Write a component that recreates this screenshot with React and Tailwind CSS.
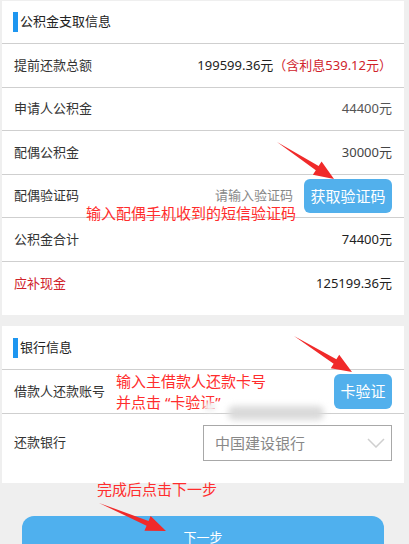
import React from "react";

function arrowPts(x1, y1, x2, y2, headLen = 20, headW = 8, shaftW = 2.6) {
  const dx = x2 - x1, dy = y2 - y1;
  const L = Math.hypot(dx, dy);
  const ux = dx / L, uy = dy / L;
  const nx = -uy, ny = ux;
  const bx = x2 - ux * headLen, by = y2 - uy * headLen;
  const pts = [
    [x1, y1],
    [bx + nx * shaftW, by + ny * shaftW],
    [bx + nx * headW, by + ny * headW],
    [x2, y2],
    [bx - nx * headW, by - ny * headW],
    [bx - nx * shaftW, by - ny * shaftW],
  ];
  return pts.map((p) => p.join(",")).join(" ");
}

function Row({ label, children, labelClass = "text-[#333]", last = false, className = "h-[44px]" }) {
  return (
    <div className={`flex items-center justify-between pl-[12px] pr-[12px] ${last ? "" : "border-b border-[#cfcfcf]"} ${className}`}>
      <span className={`text-[13px] ${labelClass}`}>{label}</span>
      {children}
    </div>
  );
}

function Header({ title, className = "h-[43px]" }) {
  return (
    <div className={`flex items-center pl-[11px] border-b border-[#cfcfcf] ${className}`}>
      <div className="w-[5px] h-[20px] bg-[#1e96f0] mr-[2px]" />
      <span className="text-[13px] text-[#222]">{title}</span>
    </div>
  );
}

export default function App() {
  return (
    <div className="relative w-[409px] h-[544px] overflow-hidden bg-[#efefef] font-['Noto_Sans','Noto_Sans_CJK_SC',sans-serif]">
      <div className="pt-[1px] pl-[2px] pr-[5px]">
        <div className="bg-white pb-[9px]">
          <Header title="公积金支取信息" />
          <Row label="提前还款总额">
            <span className="text-[13px] text-[#222]">
              199599.36元<span className="text-[#d0232b]">（含利息539.12元）</span>
            </span>
          </Row>
          <Row label="申请人公积金" className="h-[43px]">
            <span className="text-[13px] text-[#555]">44400元</span>
          </Row>
          <Row label="配偶公积金">
            <span className="text-[13px] text-[#444]">30000元</span>
          </Row>
          <Row label="配偶验证码" className="h-[43px]">
            <div className="flex items-center">
              <span className="text-[13px] text-[#888] mr-[11px]">请输入验证码</span>
              <div className="h-[34px] w-[88px] rounded-[6px] bg-[#52b0ec] flex items-center justify-center text-white text-[15px]">
                获取验证码
              </div>
            </div>
          </Row>
          <Row label="公积金合计">
            <span className="text-[13px] text-[#222]">74400元</span>
          </Row>
          <Row label="应补现金" labelClass="text-[#d0232b]" last className="h-[44px]">
            <span className="text-[13px] text-[#222]">125199.36元</span>
          </Row>
        </div>

        <div className="bg-white mt-[11px]">
          <Header title="银行信息" className="h-[44px]" />
          <Row label="借款人还款账号">
            <div className="h-[35px] w-[58px] rounded-[6px] bg-[#52b0ec] flex items-center justify-center text-white text-[15px]">
              卡验证
            </div>
          </Row>
          <Row label="还款银行" last className="pt-[11px] pb-[22px]">
            <div className="w-[189px] h-[36px] border border-[#a8a8a8] flex items-center justify-between pl-[11px] pr-[6px]">
              <span className="text-[15px] text-[#888]">中国建设银行</span>
              <svg width="18" height="10" viewBox="0 0 18 10" fill="none">
                <path d="M1 1 L9 9 L17 1" stroke="#cfcfcf" strokeWidth="1.5" />
              </svg>
            </div>
          </Row>
        </div>

        <div className="pt-[33px] pl-[20px] pr-[20px]">
          <div className="h-[44px] rounded-t-[12px] bg-[#4fb0ee] flex items-center justify-center text-white text-[13px]">
            下一步
          </div>
        </div>
      </div>

      {/* annotations */}
      <div className="absolute left-[86px] top-[203px] text-[15px] leading-[20px] text-[#ff2d2d] whitespace-nowrap">
        输入配偶手机收到的短信验证码
      </div>
      <div className="absolute left-[116px] top-[371px] text-[15px] leading-[20px] text-[#ff2d2d] whitespace-nowrap">
        输入主借款人还款卡号
      </div>
      <div className="absolute left-[116px] top-[392px] text-[15px] leading-[20px] text-[#ff2d2d] whitespace-nowrap">
        并点击 “卡验证”
      </div>
      <div className="absolute left-[97px] top-[479px] text-[15px] leading-[20px] text-[#ff2d2d] whitespace-nowrap">
        完成后点击下一步
      </div>

      {/* blurred area */}
      <div className="absolute left-[228px] top-[406px] w-[96px] h-[14px] bg-[#dadada] blur-[3px] rounded-[6px]" />
      <div className="absolute left-[204px] top-[402px] w-[12px] h-[10px] bg-[#f3f3f3] blur-[2px] rounded-full" />

      <svg className="absolute left-0 top-0" width="409" height="544" viewBox="0 0 409 544">
        <polygon points={arrowPts(277, 142, 334, 179)} fill="#f02a2a" />
        <polygon points={arrowPts(294, 336, 352, 372)} fill="#f02a2a" />
        <polygon points={arrowPts(99, 503, 166, 531)} fill="#f02a2a" />
      </svg>
    </div>
  );
}
